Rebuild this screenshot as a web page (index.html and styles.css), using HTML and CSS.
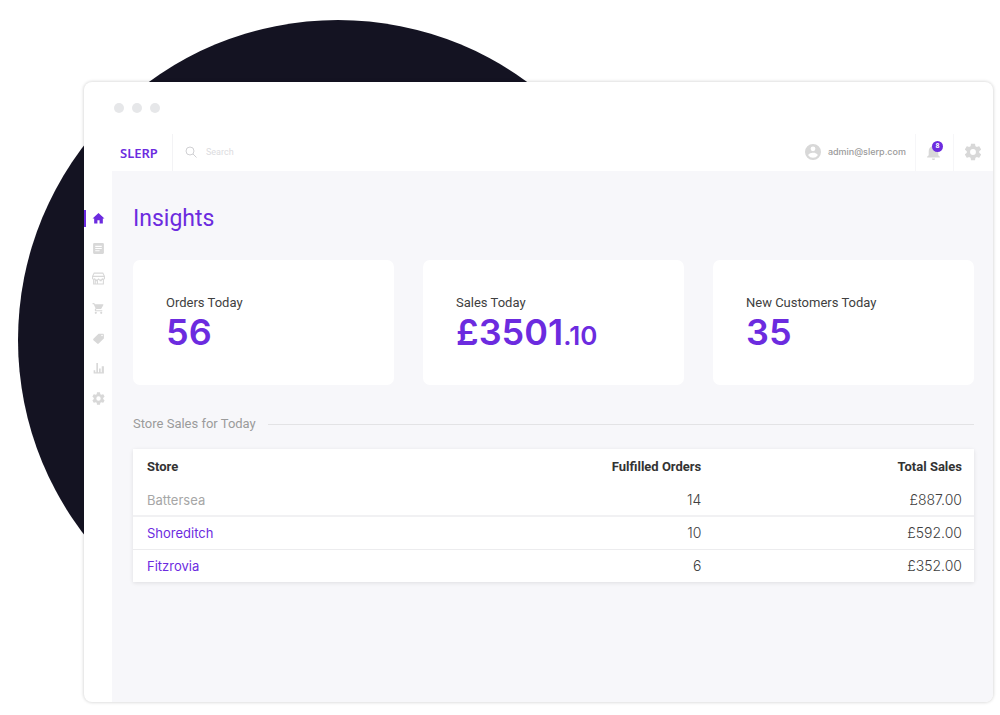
FILE: index.html
```html
<!DOCTYPE html>
<html lang="en">
<head>
<meta charset="utf-8">
<meta name="viewport" content="width=device-width, initial-scale=1">
<title>Slerp – Insights</title>
<link rel="stylesheet" href="styles.css">
</head>
<body>
<svg width="0" height="0" class="defs" aria-hidden="true">
  <symbol id="gear" viewBox="0 0 24 24"><path d="M19.43 12.98c.04-.32.07-.64.07-.98s-.03-.66-.07-.98l2.11-1.65c.19-.15.24-.42.12-.64l-2-3.46c-.12-.22-.39-.3-.61-.22l-2.49 1c-.52-.4-1.08-.73-1.69-.98l-.38-2.65A.49.49 0 0 0 14 2h-4c-.25 0-.46.18-.49.42l-.38 2.65c-.61.25-1.17.59-1.69.98l-2.49-1c-.23-.09-.49 0-.61.22l-2 3.46c-.13.22-.07.49.12.64l2.11 1.65c-.04.32-.07.65-.07.98s.03.66.07.98l-2.11 1.65c-.19.15-.24.42-.12.64l2 3.46c.12.22.39.3.61.22l2.49-1c.52.4 1.08.73 1.69.98l.38 2.65c.03.24.24.42.49.42h4c.25 0 .46-.18.49-.42l.38-2.65c.61-.25 1.17-.59 1.69-.98l2.49 1c.23.09.49 0 .61-.22l2-3.46c.12-.22.07-.49-.12-.64l-2.11-1.65zM12 15.5a3.5 3.5 0 1 1 0-7 3.5 3.5 0 0 1 0 7z"/></symbol>
</svg>
<div class="backdrop"></div>
<div class="window">
  <div class="titlebar"><span class="dot"></span><span class="dot"></span><span class="dot"></span></div>
  <div class="app">
    <nav class="sidebar" aria-label="Main">
      <a class="nav-item active" href="#" aria-label="Home"><svg class="icon-lg" viewBox="0 0 24 24"><path d="M10 21v-6h4v6h6v-9h3L12 2 1 12h3v9z"/></svg></a>
      <a class="nav-item" href="#" aria-label="Orders"><svg class="icon-lg" viewBox="0 0 24 24"><path d="M20 2H4a2 2 0 0 0-2 2v16c0 1.100.9 2 2 2h16a2 2 0 0 0 2-2V4a2 2 0 0 0-2-2zm-6 15H6v-2h8v2zm4-4H6v-2h12v2zm0-4H6V7h12v2z"/></svg></a>
      <a class="nav-item" href="#" aria-label="Stores"><svg class="icon-lg outline" viewBox="0 0 24 24"><path d="M4 2h16l3 6v3a2 2 0 0 1-4 1 3.500 3 0 0 1-7 0 3.500 3 0 0 1-7 0 2 2 0 0 1-4-1V8zM1 8h22M3 13v9h18v-9M6 22v-6h4v6M14 16h4"/></svg></a>
      <a class="nav-item" href="#" aria-label="Cart"><svg class="icon-lg" viewBox="0 0 24 24"><path d="M7 18a2 2 0 1 0 0 4 2 2 0 0 0 0-4zM1 2v2h2l3.600 7.590-1.350 2.450C4.520 15.370 5.480 17 7 17h12v-2H7.420l-.13-.25.9-1.750h7.450c.75 0 1.410-.41 1.750-1.030l3.580-6.490A1 1 0 0 0 20.100 4H5.210l-.94-2H1zm16 16a2 2 0 1 0 0 4 2 2 0 0 0 0-4z"/></svg></a>
      <a class="nav-item" href="#" aria-label="Offers"><svg class="icon-lg" viewBox="0 0 24 24"><path d="M2.600 12.400 11.600 3.500c.4-.3.900-.5 1.400-.5h7c1.100 0 2 .9 2 2v6c0 .6-.2 1.100-.6 1.400l-9 9c-.8.8-2 .8-2.800 0l-7-6.200c-.8-.8-.8-2 0-2.800zM18.500 8a1.500 1.500 0 1 0 0-3 1.500 1.500 0 0 0 0 3z"/></svg></a>
      <a class="nav-item" href="#" aria-label="Reports"><svg class="icon-lg" viewBox="0 0 24 24"><path d="M3 15h3v6H3zM8 2h3v19H8zM13 12h3v9h-3zM18 8h4v13h-4zM3 19h19v2H3z"/></svg></a>
      <a class="nav-item" href="#" aria-label="Settings"><svg class="icon-xl"><use href="#gear"/></svg></a>
    </nav>
    <div class="content">
      <header class="topbar">
        <a class="logo" href="#">SLERP</a>
        <label class="search">
          <svg class="search-icon" viewBox="0 0 12 12"><circle cx="5" cy="5" r="4"/><path d="M8 8l3.500 3.500"/></svg>
          <input type="search" placeholder="Search" aria-label="Search">
        </label>
        <button class="account" type="button">
          <svg class="icon-user" viewBox="2 2 20 20"><path d="M12 2a10 10 0 1 0 0 20 10 10 0 0 0 0-20zm0 3a3 3 0 1 1 0 6 3 3 0 0 1 0-6zm0 14.200a7.200 7.200 0 0 1-6-3.220c.03-1.990 4-3.080 6-3.080s5.970 1.090 6 3.080a7.200 7.200 0 0 1-6 3.220z"/></svg>
          <span>admin@slerp.com</span>
        </button>
        <button class="tool" type="button" aria-label="Notifications">
          <svg class="icon-bell" viewBox="4 2 16 20"><path d="M12 22c1.100 0 2-.9 2-2h-4c0 1.100.9 2 2 2zm6-6v-5c0-3.070-1.640-5.640-4.500-6.320V4a1.500 1.500 0 0 0-3 0v.68C7.630 5.360 6 7.920 6 11v5l-2 2v1h16v-1z"/></svg>
          <span class="badge">8</span>
        </button>
        <button class="tool" type="button" aria-label="Settings"><svg class="icon-gear"><use href="#gear"/></svg></button>
      </header>
      <main class="page">
        <h1>Insights</h1>
        <section class="cards">
          <article class="card"><h2>Orders Today</h2><p>56</p></article>
          <article class="card"><h2>Sales Today</h2><p>£3501<small>.10</small></p></article>
          <article class="card"><h2>New Customers Today</h2><p>35</p></article>
        </section>
        <h2 class="section-title">Store Sales for Today</h2>
        <table class="sales">
          <thead><tr><th scope="col">Store</th><th scope="col">Fulfilled Orders</th><th scope="col">Total Sales</th></tr></thead>
          <tbody>
            <tr><td class="muted">Battersea</td><td>14</td><td>£887.00</td></tr>
            <tr><td><a href="#">Shoreditch</a></td><td>10</td><td>£592.00</td></tr>
            <tr><td><a href="#">Fitzrovia</a></td><td>6</td><td>£352.00</td></tr>
          </tbody>
        </table>
      </main>
    </div>
  </div>
</div>
</body>
</html>
```
FILE: styles.css
```css
* { box-sizing: border-box; }

body {
  margin: 0;
  min-height: 100vh;
  display: flex;
  padding: 82px 7px 13px 84px;
  background: #fff;
  font-family: Roboto, sans-serif;
  color: #404040;
}

h1, h2, p { margin: 0; font-weight: 400; }
a { color: inherit; text-decoration: none; }
button { border: 0; padding: 0; background: none; font: inherit; color: inherit; cursor: pointer; }
svg { display: block; fill: currentColor; }
.defs { position: absolute; }

.backdrop {
  position: absolute;
  left: 18px;
  top: 20px;
  width: 640px;
  height: 640px;
  border-radius: 50%;
  background: #141322;
}

.window {
  position: relative;
  flex: 1;
  display: flex;
  flex-direction: column;
  background: #fff;
  border-radius: 8px;
  box-shadow: 0 0 3px 1px rgba(0, 0, 0, .13);
  overflow: hidden;
}

.titlebar { display: flex; gap: 8px; padding: 21px 30px; }
.dot { width: 10px; height: 10px; border-radius: 50%; background: #e6e7e9; }

.app { flex: 1; display: flex; }

.sidebar { width: 28px; padding-top: 69px; color: #d8d8d8; }
.nav-item { display: flex; align-items: center; justify-content: center; height: 30px; position: relative; }
.active { color: #6c2bdf; }
.active::before { content: ""; position: absolute; left: 0; top: 7px; width: 2px; height: 17px; background: #6c2bdf; }
.icon-lg { width: 13px; height: 13px; }
.icon-xl { width: 15px; height: 15px; }
.outline { fill: none; stroke: currentColor; stroke-width: 2; }

.content { flex: 1; display: flex; flex-direction: column; }

.topbar { display: flex; height: 37px; color: #d8d8d8; }
.logo {
  display: flex;
  align-items: center;
  width: 61px;
  padding-left: 8px;
  border-right: 1px solid #f3f3f5;
  font: 600 13px "Noto Sans", sans-serif;
  color: #6c2bdf;
}
.search { flex: 1; display: flex; align-items: center; gap: 9px; padding: 0 0 2px 12px; }
.search-icon { width: 12px; height: 12px; fill: none; stroke: #d0d0d3; stroke-width: 1; }
.search input { flex: 1; min-width: 0; border: 0; padding: 0; outline: 0; background: none; font: 9px Roboto, sans-serif; color: #777; }
.search input::placeholder { color: #dcdce0; opacity: 1; }
.account { display: flex; align-items: center; gap: 7px; padding: 0 9px 2px 0; font: 500 9px Inter, sans-serif; }
.account span { color: #9b9b9b; }
.icon-user { width: 16px; height: 16px; }
.tool { display: flex; align-items: center; justify-content: center; position: relative; width: 38px; padding: 0 2px 2px 0; border-left: 1px solid #f6f6f8; }
.tool:last-child { width: 40px; }
.icon-bell { width: 13px; height: 16px; }
.icon-gear { width: 20px; height: 20px; }
.badge {
  position: absolute;
  top: 7px;
  left: 16px;
  width: 11px;
  height: 11px;
  border-radius: 50%;
  background: #6c2bdf;
  color: #fff;
  font: 700 7px/11px Roboto, sans-serif;
  text-align: center;
}

.page { flex: 1; padding: 34px 19px 32px 21px; background: #f7f7fa; }
h1 { font-size: 23px; line-height: 28px; color: #6c2bdf; }

.cards { display: grid; grid-template-columns: repeat(3, 1fr); gap: 29px; margin-top: 27px; }
.card { padding: 35px 33px 32px; background: #fff; border-radius: 7px; }
.card h2 { font-size: 13px; line-height: 16px; }
.card p { font: 600 36px/42px Inter, sans-serif; color: #6c2bdf; }
.card small { font-size: 26px; line-height: 1; }

.section-title {
  display: flex;
  align-items: center;
  gap: 12px;
  margin-top: 29px;
  font-size: 13px;
  line-height: 20px;
  color: #9b9b9b;
}
.section-title::after { content: ""; flex: 1; height: 1px; background: #e3e3e5; }

.sales {
  width: 100%;
  margin-top: 15px;
  border-collapse: collapse;
  table-layout: fixed;
  background: #fff;
  box-shadow: 0 1px 4px rgba(0, 0, 0, .1);
}
.sales th, .sales td { padding: 0 12px 0 14px; text-align: right; }
.sales th:first-child, .sales td:first-child { width: 38%; text-align: left; }
.sales th:last-child { width: 31%; }
.sales th { height: 35px; font-size: 13px; font-weight: 700; color: #333; }
.sales td { height: 32px; font: 300 14px Inter, sans-serif; }
.sales td:first-child { font-size: 13px; color: #6c2bdf; font-weight: 400; }
.sales td.muted:first-child { color: #a6a6a6; }
.sales tbody tr + tr td { height: 33px; border-top: 1px solid #ececee; }
.sales tbody tr:nth-child(2) td { border-top: 2px solid #f1f1f3; }
```
